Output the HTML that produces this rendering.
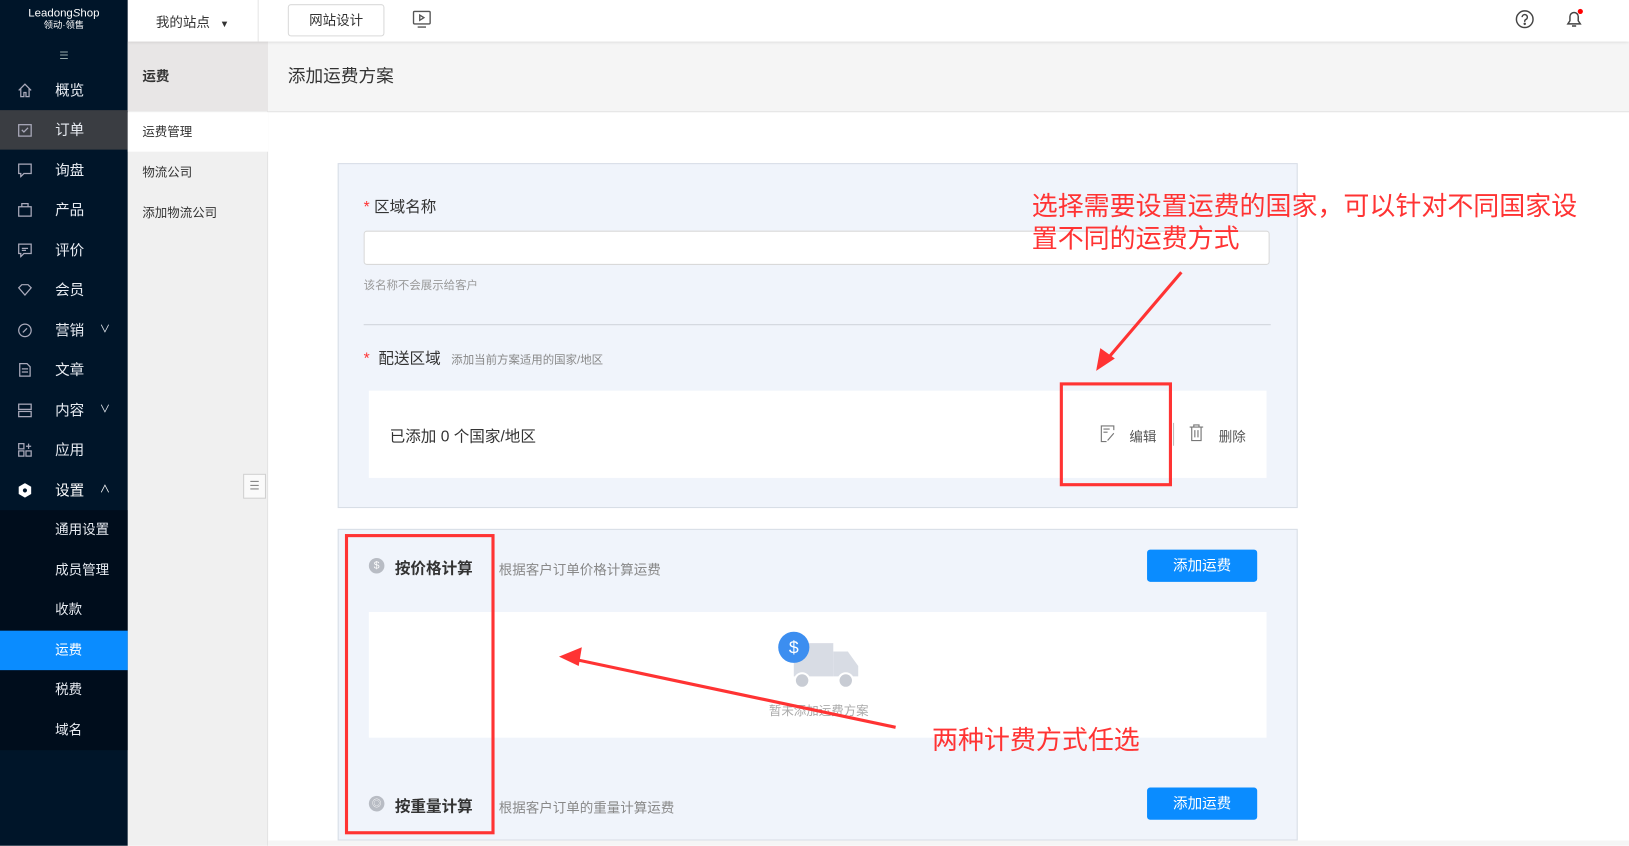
<!DOCTYPE html>
<html><head><meta charset="utf-8"><style>
*{box-sizing:border-box;margin:0;padding:0}
html,body{width:1629px;height:846px;overflow:hidden;background:#fff}
body{font-family:"Liberation Sans","Noto Sans CJK SC",sans-serif;color:#333}
#w{position:absolute;left:0;top:0;width:1568px;height:814px;transform:scale(1.039);transform-origin:0 0}
.a{position:absolute}
.side{left:0;top:0;width:123px;height:814px;background:#001529}
.mi{position:absolute;left:0;width:123px;height:38px;color:#e8ecf2;font-size:14px;line-height:38px;padding-left:53px}
.mi.s{font-size:13px}
.mi svg{position:absolute;left:17px;top:12px}
.sub{background:#000d1c}
.red{color:#f33;font-size:25px;line-height:31px;font-family:"Liberation Sans","Noto Sans CJK SC",sans-serif}
.btn{position:absolute;background:#0a8cff;color:#fff;border-radius:3px;font-size:14px;text-align:center;line-height:31px;width:106px;height:31px}
</style></head><body><div id="w">
<div class="a side">
 <div class="a" style="left:0;width:123px;top:8px;text-align:center;color:#fff;font-size:11px;line-height:11px">Leadong<span style="font-style:italic">S</span>hop<br><span style="font-size:9px">领动·领售</span></div>
 <div class="a" style="left:57px;top:49px;color:#9aa;font-size:10px">☰</div>
 <div class="mi" style="top:68px"><svg width="14" height="14" viewBox="0 0 14 14" fill="none" stroke="#aab" stroke-width="1.2"><path d="M1 7L7 1l6 6M3 5v8h3V9h2v4h3V5"/></svg>概览</div>
 <div class="mi" style="top:106px;background:#3a3d42"><svg width="14" height="14" viewBox="0 0 14 14" fill="none" stroke="#aab" stroke-width="1.2"><rect x="1" y="2" width="12" height="11"/><path d="M4 7l2 2 4-4"/></svg>订单</div>
 <div class="mi" style="top:145px"><svg width="14" height="14" viewBox="0 0 14 14" fill="none" stroke="#aab" stroke-width="1.2"><path d="M1 1h12v9H6l-3 3v-3H1z"/></svg>询盘</div>
 <div class="mi" style="top:183px"><svg width="14" height="14" viewBox="0 0 14 14" fill="none" stroke="#aab" stroke-width="1.2"><path d="M1 4h12v9H1zM4 4V1h6v3"/></svg>产品</div>
 <div class="mi" style="top:222px"><svg width="14" height="14" viewBox="0 0 14 14" fill="none" stroke="#aab" stroke-width="1.2"><path d="M1 1h12v9H6l-3 3v-3H1zM4 5h6M4 7h4"/></svg>评价</div>
 <div class="mi" style="top:260px"><svg width="14" height="14" viewBox="0 0 14 14" fill="none" stroke="#aab" stroke-width="1.2"><path d="M1 5l3-3h6l3 3-6 7z"/></svg>会员</div>
 <div class="mi" style="top:299px"><svg width="14" height="14" viewBox="0 0 14 14" fill="none" stroke="#aab" stroke-width="1.2"><circle cx="7" cy="7" r="6"/><path d="M5 9l4-4"/></svg>营销<span style="position:absolute;left:96px;font-size:10px">∨</span></div>
 <div class="mi" style="top:337px"><svg width="14" height="14" viewBox="0 0 14 14" fill="none" stroke="#aab" stroke-width="1.2"><path d="M2 1h7l3 3v9H2zM4 6h6M4 9h6"/></svg>文章</div>
 <div class="mi" style="top:376px"><svg width="14" height="14" viewBox="0 0 14 14" fill="none" stroke="#aab" stroke-width="1.2"><rect x="1" y="1" width="12" height="5"/><rect x="1" y="8" width="12" height="5"/></svg>内容<span style="position:absolute;left:96px;font-size:10px">∨</span></div>
 <div class="mi" style="top:414px"><svg width="14" height="14" viewBox="0 0 14 14" fill="none" stroke="#aab" stroke-width="1.2"><rect x="1" y="1" width="5" height="5"/><rect x="1" y="8" width="5" height="5"/><rect x="8" y="8" width="5" height="5"/><path d="M10.5 1v5M8 3.5h5"/></svg>应用</div>
 <div class="mi" style="top:453px;color:#fff"><svg width="14" height="14" viewBox="0 0 14 14"><path d="M7 0l6 3.5v7L7 14l-6-3.5v-7z" fill="#fff"/><circle cx="7" cy="7" r="2" fill="#001529"/></svg>设置<span style="position:absolute;left:96px;font-size:10px">∧</span></div>
 <div class="a sub" style="left:0;top:491px;width:123px;height:231px"></div>
 <div class="mi s" style="top:491px">通用设置</div>
 <div class="mi s" style="top:530px">成员管理</div>
 <div class="mi s" style="top:568px">收款</div>
 <div class="mi s" style="top:607px;background:#0a8cff;color:#fff">运费</div>
 <div class="mi s" style="top:645px">税费</div>
 <div class="mi s" style="top:684px">域名</div>
</div>
<div class="a" style="left:123px;top:0;width:1445px;height:40px;background:#fff;box-shadow:0 1px 3px rgba(0,0,0,.12);z-index:2">
 <div class="a" style="left:27px;top:11px;font-size:13px;color:#333">我的站点 <span style="font-size:9px;margin-left:6px">▼</span></div>
 <div class="a" style="left:125px;top:0;width:1px;height:40px;background:#e6e6e6"></div>
 <div class="a" style="left:154px;top:4px;width:93px;height:31px;border:1px solid #d9d9d9;border-radius:3px;font-size:13px;text-align:center;line-height:29px">网站设计</div>
 <svg class="a" style="left:274px;top:10px" width="18" height="18" viewBox="0 0 18 18" fill="none" stroke="#555" stroke-width="1.3"><rect x="1" y="1" width="16" height="12" rx="1"/><path d="M7 4.5v5l4-2.5z M5 16h8"/></svg>
 <svg class="a" style="left:1335px;top:9px" width="19" height="19" viewBox="0 0 19 19" fill="none" stroke="#444" stroke-width="1.4"><circle cx="9.5" cy="9.5" r="8"/><path d="M7 7.5a2.5 2.5 0 1 1 3.5 2.3c-.7.3-1 .8-1 1.5v.7"/><circle cx="9.5" cy="14" r=".5" fill="#444"/></svg>
 <svg class="a" style="left:1382px;top:8px" width="20" height="20" viewBox="0 0 20 20" fill="none" stroke="#444" stroke-width="1.4"><path d="M4 15h12l-2-3V8a4 4 0 0 0-8 0v4zM8 17h4"/><circle cx="16" cy="3" r="2.5" fill="#f00" stroke="none"/></svg>
</div>
<div class="a" style="left:123px;top:40px;width:135px;height:774px;background:#f0f0f0;border-right:1px solid #e4e4e4"></div>
<div class="a" style="left:123px;top:40px;width:135px;height:67px;background:#e8e6e6;font-size:13px;font-weight:bold;line-height:67px;padding-left:14px">运费</div>
<div class="a" style="left:123px;top:108px;width:135px;height:38px;background:#fff;font-size:12px;line-height:38px;padding-left:14px">运费管理</div>
<div class="a" style="left:137px;top:157px;font-size:12px">物流公司</div>
<div class="a" style="left:137px;top:196px;font-size:12px">添加物流公司</div>
<div class="a" style="left:234px;top:456px;width:22px;height:24px;border:1px solid #d0d0d0;background:#fafafa;font-size:11px;color:#888;text-align:center;line-height:22px">☰</div>
<div class="a" style="left:258px;top:40px;width:1310px;height:68px;background:#f5f5f5;border-bottom:1px solid #e4e4e4;font-size:17px;line-height:68px;padding-left:19px">添加运费方案</div>
<div class="a" style="left:325px;top:157px;width:924px;height:332px;background:#f0f4fb;border:1px solid #d8dde6"></div>
<div class="a" style="left:350px;top:188px;font-size:15px"><span style="color:#f33">*</span> 区域名称</div>
<div class="a" style="left:350px;top:222px;width:872px;height:33px;background:#fff;border:1px solid #d9d9d9;border-radius:3px"></div>
<div class="a" style="left:350px;top:266px;font-size:11px;color:#999">该名称不会展示给客户</div>
<div class="a" style="left:350px;top:312px;width:873px;height:1px;background:#d0d4da"></div>
<div class="a" style="left:350px;top:334px;font-size:15px"><span style="color:#f33">*</span>&nbsp; 配送区域 <span style="font-size:11px;color:#888;margin-left:6px">添加当前方案适用的国家/地区</span></div>
<div class="a" style="left:355px;top:376px;width:864px;height:84px;background:#fff"></div>
<div class="a" style="left:375px;top:409px;font-size:15px">已添加 0 个国家/地区</div>
<svg class="a" style="left:1059px;top:409px" width="15" height="17" viewBox="0 0 15 17" fill="none" stroke="#777" stroke-width="1.1"><path d="M13 5V1H1v15h5M3 4h6M3 7h4M7 15l6-7"/></svg>
<div class="a" style="left:1087px;top:410px;font-size:13px;color:#555">编辑</div>
<div class="a" style="left:1129px;top:407px;width:1px;height:22px;background:#bbb"></div>
<svg class="a" style="left:1144px;top:408px" width="15" height="17" viewBox="0 0 15 17" fill="none" stroke="#777" stroke-width="1.1"><path d="M1 3h13M5 3V1h5v2M3 3v13h9V3M6 6v7M9 6v7"/></svg>
<div class="a" style="left:1173px;top:410px;font-size:13px;color:#555">删除</div>
<div class="a" style="left:325px;top:509px;width:924px;height:300px;background:#f0f4fb;border:1px solid #d8dde6"></div>
<div class="a" style="left:258px;top:809px;width:1310px;height:5px;background:#f5f5f5"></div>
<div class="a" style="left:355px;top:537px;width:15px;height:15px;border-radius:50%;background:#b8bcc4;color:#fff;font-size:10px;text-align:center;line-height:15px">$</div>
<div class="a" style="left:380px;top:536px;font-size:15px;font-weight:bold">按价格计算</div>
<div class="a" style="left:480px;top:538px;font-size:13px;color:#888">根据客户订单价格计算运费</div>
<div class="btn" style="left:1104px;top:529px">添加运费</div>
<div class="a" style="left:355px;top:589px;width:864px;height:121px;background:#fff"></div>
<svg class="a" style="left:748px;top:607px" width="80" height="58" viewBox="0 0 80 58"><rect x="16" y="12" width="38" height="32" fill="#d8dce4"/><path d="M54 20h14l10 14v10H54z" fill="#d8dce4"/><circle cx="24" cy="48" r="7" fill="#c8ccd4" stroke="#fff" stroke-width="2"/><circle cx="66" cy="48" r="7" fill="#c8ccd4" stroke="#fff" stroke-width="2"/><circle cx="16" cy="16" r="15" fill="#3c8ef0"/><text x="16" y="22" font-size="17" fill="#fff" text-anchor="middle" font-family="Liberation Sans">$</text></svg>
<div class="a" style="left:740px;top:675px;font-size:12px;color:#aaa">暂未添加运费方案</div>
<div class="a" style="left:355px;top:766px;width:15px;height:15px;border-radius:50%;background:#b8bcc4;color:#fff;font-size:9px;text-align:center;line-height:15px">◎</div>
<div class="a" style="left:380px;top:765px;font-size:15px;font-weight:bold">按重量计算</div>
<div class="a" style="left:480px;top:767px;font-size:13px;color:#888">根据客户订单的重量计算运费</div>
<div class="btn" style="left:1104px;top:758px">添加运费</div>
<div class="a red" style="left:993px;top:184px;width:580px">选择需要设置运费的国家，可以针对不同国家设<br>置不同的运费方式</div>
<div class="a" style="left:1020px;top:368px;width:108px;height:100px;border:3px solid #f33"></div>
<div class="a" style="left:332px;top:514px;width:144px;height:289px;border:3px solid #f33"></div>
<svg class="a" style="left:0;top:0" width="1568" height="814"><path d="M1137 262L1062 350" stroke="#f33" stroke-width="3"/><path d="M1055 357l4-22 14 10z" fill="#f33"/><path d="M862 700L555 635" stroke="#f33" stroke-width="3"/><path d="M538 632l22-9-3 18z" fill="#f33"/></svg>
<div class="a red" style="left:897px;top:698px">两种计费方式任选</div>
</div></body></html>
